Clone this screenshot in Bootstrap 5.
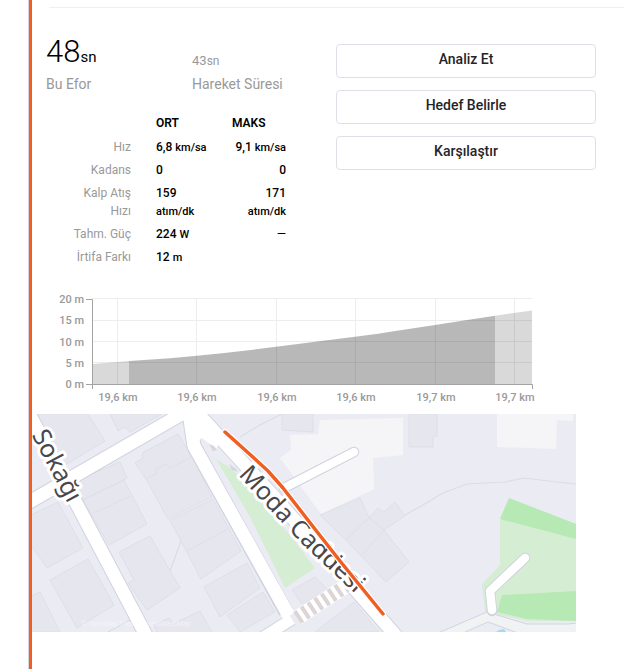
<!DOCTYPE html>
<html lang="tr">
<head>
<meta charset="utf-8">
<meta name="viewport" content="width=device-width, initial-scale=1">
<title>Segment Eforu</title>
<link href="https://cdn.jsdelivr.net/npm/bootstrap@5.3.0/dist/css/bootstrap.min.css" rel="stylesheet">
<style>
body { font-family: Roboto, "Liberation Sans", sans-serif; color: #000; }
.effort-panel { margin-left: 28px; border-left: 1px solid #d3d6e0; }
.effort-body { border-left: 3px solid #f15e22; padding-top: 7px; }
.top-rule { margin: 0 0 0 17px; border-top: 1px solid #f0f0f0; }
.summary { padding: 28px 28px 0 14px; }
.stats { flex: 0 0 290px; }
.stat-main { width: 146px; }
.stat-value { font-size: 31px; font-weight: 300; line-height: 32px; }
.stat-value small { font-size: 15px; font-weight: 400; }
.stat-value.minor { font-size: 13px; line-height: 16px; font-weight: 400; color: #999; padding-bottom: 4px; }
.stat-value.minor small { font-size: 12px; }
.stat-label { font-size: 14px; line-height: 20px; color: #999; margin-top: 1px; }
.metrics { width: 240px; margin-top: 20px; table-layout: fixed; font-size: 12px; line-height: 18px; }
.metrics td, .metrics th { padding: 0 0 5px; vertical-align: top; line-height: 18px; }
.metrics thead th { padding-bottom: 6px; font-weight: 600; }
.metrics tbody th { padding-right: 25px; text-align: right; font-weight: 400; color: #999; }
.metrics tbody td { font-weight: 500; white-space: nowrap; }
.metrics tbody td small { font-size: 11px; line-height: 16px; }
.metrics tbody td.no-value { font-weight: 400; }
.metrics td:last-child { text-align: right; }
.c-label { width: 110px; } .c-avg { width: 76px; } .c-max { width: 54px; }
.actions { gap: 12px; padding-top: 8px; }
.btn-effort { height: 34px; padding: 0 8px 4px; font-size: 14px; font-weight: 500; line-height: 20px; color: #242428; background: #fff; border: 1px solid #dfdfe8; border-radius: 4px; }
.chart { margin: 19px 48px 0 14px; }
.chart text { font-size: 11px; font-weight: 500; fill: #999; }
.map { margin-right: 48px; }
.map .street { font-family: "Noto Sans", sans-serif; font-size: 25px; fill: #47474d; stroke: #fff; stroke-width: 6; stroke-linejoin: round; paint-order: stroke; }
</style>
<script src="https://cdn.jsdelivr.net/npm/bootstrap@5.3.0/dist/js/bootstrap.bundle.min.js"></script>
</head>
<body>
<main class="effort-panel">
<div class="effort-body min-vh-100">
  <div class="top-rule"></div>
  <div class="summary d-flex align-items-start">
    <section class="stats">
      <div class="d-flex align-items-end">
        <div class="stat-main">
          <div class="stat-value">48<small>sn</small></div>
          <div class="stat-label">Bu Efor</div>
        </div>
        <div>
          <div class="stat-value minor">43<small>sn</small></div>
          <div class="stat-label">Hareket Süresi</div>
        </div>
      </div>
      <table class="metrics">
        <colgroup><col class="c-label"><col class="c-avg"><col class="c-max"></colgroup>
        <thead><tr><td></td><th scope="col">ORT</th><th scope="col">MAKS</th></tr></thead>
        <tbody>
          <tr><th scope="row">Hız</th><td>6,8 <small>km/sa</small></td><td>9,1 <small>km/sa</small></td></tr>
          <tr><th scope="row">Kadans</th><td>0</td><td>0</td></tr>
          <tr><th scope="row">Kalp Atış<br>Hızı</th><td>159<br><small>atım/dk</small></td><td>171<br><small>atım/dk</small></td></tr>
          <tr><th scope="row">Tahm. Güç</th><td>224 <small>W</small></td><td class="no-value">—</td></tr>
          <tr><th scope="row">İrtifa Farkı</th><td>12 <small>m</small></td><td></td></tr>
        </tbody>
      </table>
    </section>
    <div class="actions d-grid flex-grow-1">
      <button type="button" class="btn btn-effort">Analiz Et</button>
      <button type="button" class="btn btn-effort">Hedef Belirle</button>
      <button type="button" class="btn btn-effort">Karşılaştır</button>
    </div>
  </div>

  <div class="chart">
    <svg class="d-block w-100" viewBox="46 290 530 124" role="img" aria-label="Yükseklik profili">
      <g stroke="#ededed" fill="none">
        <path d="M92 298.500H532M92 320.500H532M92 341.500H532M92 362.500H532M117.500 298V384M196.500 298V384M276.500 298V384M355.500 298V384M435.500 298V384M514.500 298V384"/>
      </g>
      <path fill="#000" fill-opacity=".15" d="M93 384V364L129 361V384ZM495 384V315.700L532 310.500V384Z"/>
      <path fill="#000" fill-opacity=".28" d="M129 384V361L170 358.300 197 355.700 222 353.300 253 349.700 290 345 323 340.700 355 336.700 378 333.700 397 330.700 435 325 467 320 495 315.700V384Z"/>
      <path fill="none" stroke="#a3a3a3" d="M86 299.500H92.500V389M86 384.500H532.500V389"/>
      <g text-anchor="end"><text x="84" y="303">20 m</text><text x="84" y="324">15 m</text><text x="84" y="346">10 m</text><text x="84" y="367">5 m</text><text x="84" y="388">0 m</text></g>
      <g text-anchor="middle"><text x="118" y="401">19,6 km</text><text x="197" y="401">19,6 km</text><text x="277" y="401">19,6 km</text><text x="356" y="401">19,6 km</text><text x="436" y="401">19,7 km</text><text x="515" y="401">19,7 km</text></g>
    </svg>
  </div>

  <div class="map">
    <svg class="d-block w-100" viewBox="32 414 544 218" role="img" aria-label="Moda Caddesi haritası">
      <rect x="32" y="414" width="544" height="218" fill="#ebebf4"/>
      <g fill="#e6e6ef" stroke="#dfdfe7" stroke-width="1">
        <path d="M36 414H88L105 441 57 470ZM110 414 118 431 125 427 130 432 162 414ZM72 482 120 462 127 478 83 500ZM83 500 124 480 147 524 109 545ZM94 513 131 496"/>
        <path d="M135 463 143 458 142 453 178 434 192 457 212 497 168 519 146 479ZM146 479 157 473 155 470 166 464 170 468 192 457M170 520 213 499 241 551 201 579ZM187 551 228 529"/>
        <path d="M31 515 58 502 83 548 47 568 31 545ZM50 580 88 559 114 605 77 628ZM31 596 40 592 60 632H31ZM119 552 150 536 180 588 147 610 128 583 134 580Z"/>
        <path d="M204 587 247 563 260 588 220 617ZM227 615 263 592 275 612 240 632ZM157 632 154 625 169 618 173 624 200 611 212 632M292 590 315 577 328 590 302 604ZM315 632 354 602 379 632Z"/>
        <path d="M320 515 360 498 369 518 378 508 384 512 395 502 405 516 384 530 409 562 386 582 346 540ZM346 540 369 518 384 530M384 530 362 555M282 414H313V432L282 430ZM409 414H437V436L433 437V447H409Z"/>
      </g>
      <g fill="#f5f5f7"><path d="M320 420 403 418V455L373 458 374 489 321 514 280 458 291 450 290 435 318 434ZM497 414H573V421L557 420 556 449 497 447Z"/></g>
      <path fill="none" stroke="#d7dfe0" stroke-width="1.200" d="M405 515 423 505 443 493 467 484 505 482 524 478 557 482 576 484M240 437 260 425 282 414M170 571 181 541M108 632 130 620"/>
      <path fill="#d5eed3" d="M216 459 232 469 290 535 315 568 285 588 250 517ZM500 519 509 498 576 524V621H527L485 612 482 584 500 565Z"/>
      <path fill="#b6e9b3" d="M509 498 576 524V539L500 519ZM502 595 576 591V621L527 619 497 612Z"/>
      <path fill="#f1f2f4" stroke="#d2d4df" d="M438 633 487 612 527 624H568L577 623V633H518L488 622 463 633Z"/>
      <path fill="#a9d8f5" d="M496 632 499 630 504 629 506 632Z"/>
      <g fill="none" stroke-linejoin="round">
        <g stroke="#d0d3de">
          <path stroke-width="15" d="M26 504 192 408M25 406 64 480 148 639M189 413 194 446 286 612"/>
          <path stroke-width="15" d="M189 404 235 454 276 499 397 637"/>
          <path stroke-width="13" d="M262 638 292 619"/>
          <path stroke-width="10.500" stroke-linecap="round" d="M284 488 354 452M525 558 490 591 492 611"/>
        </g>
        <g stroke="#fff">
          <path stroke-width="13" d="M26 504 192 408M25 406 64 480 148 639M189 413 194 446 289 616"/>
          <path stroke-width="13" d="M189 404 235 454 276 499 397 637"/>
          <path stroke-width="11" d="M262 638 292 619"/>
          <path stroke-width="8.500" stroke-linecap="round" d="M284 488 354 452M525 558 490 591 492 610"/>
        </g>
        <path stroke="#fff" stroke-width="15" d="M297 618 346 586"/>
        <path stroke="#ddd4d6" stroke-width="14" stroke-dasharray="4 4" d="M297 618 346 586"/>
      </g>
      <path fill="#fff" d="M183 414H202L222 437 216 449 202 438 196 442Z"/>
      <path fill="#d6d6df" d="M209 444 214 446 217 450 213 451ZM229 464 235 468 238 472 232 470Z"/>
      <path id="sokak" fill="none" d="M15 404 68 504"/>
      <path id="moda" fill="none" d="M238 475 272 512 304 546 364 602"/>
      <text class="street" text-anchor="end"><textPath href="#sokak" startOffset="100%">Sokağı</textPath></text>
      <text class="street"><textPath href="#moda">Moda Caddesi</textPath></text>
      <g fill="none" stroke-linecap="round" stroke-linejoin="round">
        <path stroke="#fff" stroke-width="6" d="M225 432 255 459 268 471 283 488 318 533 340 561 383 614"/>
        <path stroke="#f15e22" stroke-width="3.500" d="M225 432 255 459 268 471 283 488 318 533 340 561 383 614"/>
      </g>
      <text x="81" y="626" font-size="7" fill="#fff" fill-opacity=".5">© OpenMapTiles © OpenStreetMap</text>
    </svg>
  </div>
</div>
</main>
</body>
</html>
